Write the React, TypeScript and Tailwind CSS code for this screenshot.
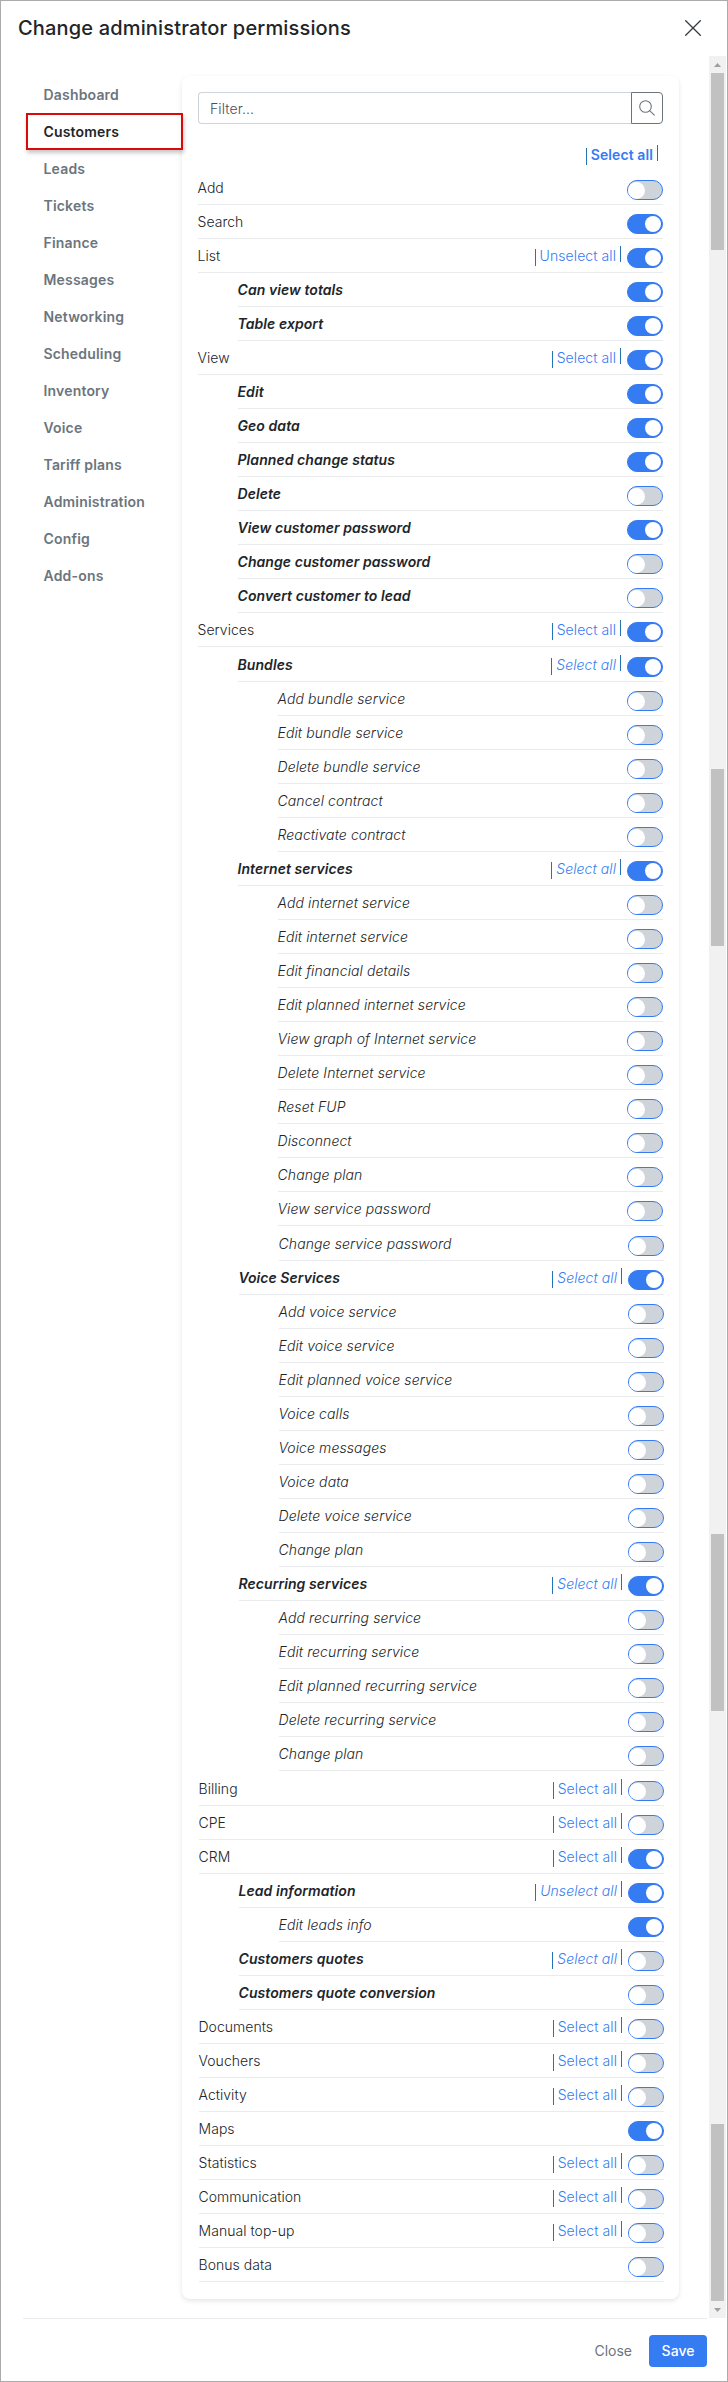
import React from "react";

type Level = 0 | 1 | 2;
type Item = { label: string; level: Level; on: boolean; link?: string; tall?: boolean };

const row = (label: string, level: Level, on = false, link?: string, tall = false): Item => ({ label, level, on, link, tall });
const S = "Select all";
const U = "Unselect all";

const upper: Item[] = [
  row("Add", 0), row("Search", 0, true), row("List", 0, true, U),
  row("Can view totals", 1, true), row("Table export", 1, true),
  row("View", 0, true, S),
  row("Edit", 1, true), row("Geo data", 1, true), row("Planned change status", 1, true), row("Delete", 1),
  row("View customer password", 1, true), row("Change customer password", 1), row("Convert customer to lead", 1),
  row("Services", 0, true, S),
  row("Bundles", 1, true, S, true),
  row("Add bundle service", 2), row("Edit bundle service", 2), row("Delete bundle service", 2),
  row("Cancel contract", 2), row("Reactivate contract", 2),
  row("Internet services", 1, true, S),
  row("Add internet service", 2), row("Edit internet service", 2), row("Edit financial details", 2),
  row("Edit planned internet service", 2), row("View graph of Internet service", 2), row("Delete Internet service", 2),
  row("Reset FUP", 2), row("Disconnect", 2), row("Change plan", 2), row("View service password", 2),
];

const lower: Item[] = [
  row("Change service password", 2, false, undefined, true),
  row("Voice Services", 1, true, S),
  row("Add voice service", 2), row("Edit voice service", 2), row("Edit planned voice service", 2), row("Voice calls", 2),
  row("Voice messages", 2), row("Voice data", 2), row("Delete voice service", 2), row("Change plan", 2),
  row("Recurring services", 1, true, S),
  row("Add recurring service", 2), row("Edit recurring service", 2), row("Edit planned recurring service", 2),
  row("Delete recurring service", 2), row("Change plan", 2),
  row("Billing", 0, false, S, true), row("CPE", 0, false, S), row("CRM", 0, true, S),
  row("Lead information", 1, true, U), row("Edit leads info", 2, true),
  row("Customers quotes", 1, false, S), row("Customers quote conversion", 1),
  row("Documents", 0, false, S), row("Vouchers", 0, false, S), row("Activity", 0, false, S), row("Maps", 0, true),
  row("Statistics", 0, false, S), row("Communication", 0, false, S), row("Manual top-up", 0, false, S), row("Bonus data", 0),
];

const menu = ["Dashboard", "Customers", "Leads", "Tickets", "Finance", "Messages", "Networking", "Scheduling", "Inventory", "Voice", "Tariff plans", "Administration", "Config", "Add-ons"];

const levelClass = [
  "font-light tracking-[0.04px]",
  "ml-10 font-semibold italic tracking-[0.07px]",
  "ml-20 font-light italic tracking-[0.1px]",
];

function SelectLink({ text, className = "" }: { text: string; className?: string }) {
  return (
    <span className={"flex h-5 items-start text-[#357bf2] " + className}>
      <span className="mt-[3px] h-[17px] w-px bg-[#2274b5]" />
      <span className="mr-1 ml-[4px] leading-5">{text}</span>
      <span className="h-[16px] w-px bg-[#2274b5]" />
    </span>
  );
}

function Toggle({ on }: { on: boolean }) {
  return (
    <span className={"flex h-5 w-9 items-center rounded-full border border-[#357bf2] " + (on ? "justify-end bg-[#357bf2]" : "bg-[#ced4da]")}>
      <span className={"rounded-full bg-white " + (on ? "mr-px size-4" : "size-[17px]")} />
    </span>
  );
}

function Row({ item }: { item: Item }) {
  return (
    <div className={"flex items-end border-b border-[#e9ebee] text-[#212529] " + (item.tall ? "h-[35px] " : "h-[34px] ") + levelClass[item.level]}>
      <span className="mb-[6px] -ml-[0.5px] grow leading-5">{item.label}</span>
      {item.link && <SelectLink text={item.link} className="mr-[6px] mb-[6px] font-[350] tracking-[0.08px]" />}
      <span className="mb-[4px]"><Toggle on={item.on} /></span>
    </div>
  );
}

export default function App() {
  return (
    <div className="flex h-[2382px] w-[728px] flex-col border border-[#ababab] bg-white font-['Inter',sans-serif] text-sm">
      <header className="flex h-[55px] shrink-0 items-start justify-between pt-[13px] pr-[26px] pl-[17px]">
        <h1 className="text-[20px] leading-[28px] font-medium tracking-[0.16px] text-[#212529]">Change administrator permissions</h1>
        <svg className="mt-[6px] size-4" viewBox="0 0 16 16" fill="none" stroke="#343a40" strokeWidth="1.3">
          <path d="M.3 .3 15.7 15.7M15.7 .3.3 15.7" />
        </svg>
      </header>

      <main className="flex h-[2262px] shrink-0">
        <nav className="w-[181px] pt-[20px] pl-[25px] font-semibold tracking-[0.18px]">
          {menu.map((name) => name === "Customers" ? (
            <div key={name} className="relative z-10 flex h-[37px] w-[157px] items-center border-2 border-[#d90a0a] pl-[15.5px] text-[#212529] shadow-[1px_3px_4px_rgba(0,0,0,0.22)]">{name}</div>
          ) : (
            <div key={name} className="flex h-[37px] items-center pl-[17.5px] text-[#6c757d]">{name}</div>
          ))}
        </nav>
        <section className="mt-5 h-[2223px] w-[497px] rounded-lg bg-white px-4 pt-4 shadow-[0_2px_5px_rgba(0,0,0,0.1)]">
          <div className="flex h-8">
            <div className="flex grow items-center rounded-l border border-r-0 border-[#ced4da] pl-[11px] pt-px font-light tracking-[0.1px] text-[#495057]">Filter...</div>
            <button className="flex w-8 items-center justify-center rounded-r border border-[#6c757d]">
              <svg className="size-4" viewBox="0 0 16 16" fill="none" stroke="#6c757d" strokeWidth="1.1">
                <circle cx="6.5" cy="6.5" r="5.8" />
                <path d="m10.6 10.6 5 4.7" />
              </svg>
            </button>
          </div>
          <div className="flex h-[47px] justify-end pt-[21px] pr-[5px]">
            <SelectLink text={S} className="font-semibold tracking-[0.1px]" />
          </div>
          {upper.map((item, i) => <Row key={i} item={item} />)}
          <div className="-mr-px ml-px">
            {lower.map((item, i) => <Row key={i} item={item} />)}
          </div>
        </section>
        <div className="ml-[30px] flex w-[17px] flex-col items-center bg-[#f1f1f1]">
          <div className="flex h-[17px] items-center"><svg width="7" height="4"><path d="M0 4 3.5 0 7 4Z" fill="#a0a0a0" /></svg></div>
          <div className="h-[177px] w-[13px] bg-[#c1c1c1]" />
          <div className="mt-[519px] h-[177px] w-[13px] bg-[#c1c1c1]" />
          <div className="mt-[588px] h-[177px] w-[13px] bg-[#c1c1c1]" />
          <div className="mt-[413px] h-[177px] w-[13px] bg-[#c1c1c1]" />
          <div className="flex h-[17px] items-center"><svg width="7" height="4"><path d="M0 0 3.5 4 7 0Z" fill="#a0a0a0" /></svg></div>
        </div>
      </main>

      <footer className="mr-[20px] ml-[22px] flex h-[63px] items-start justify-end border-t border-[#e9ebee] pt-4">
        <button className="h-8 px-[17px] text-[#6c757d]">Close</button>
        <button className="h-8 w-[58px] rounded bg-[#357bf2] font-medium text-white">Save</button>
      </footer>
    </div>
  );
}
